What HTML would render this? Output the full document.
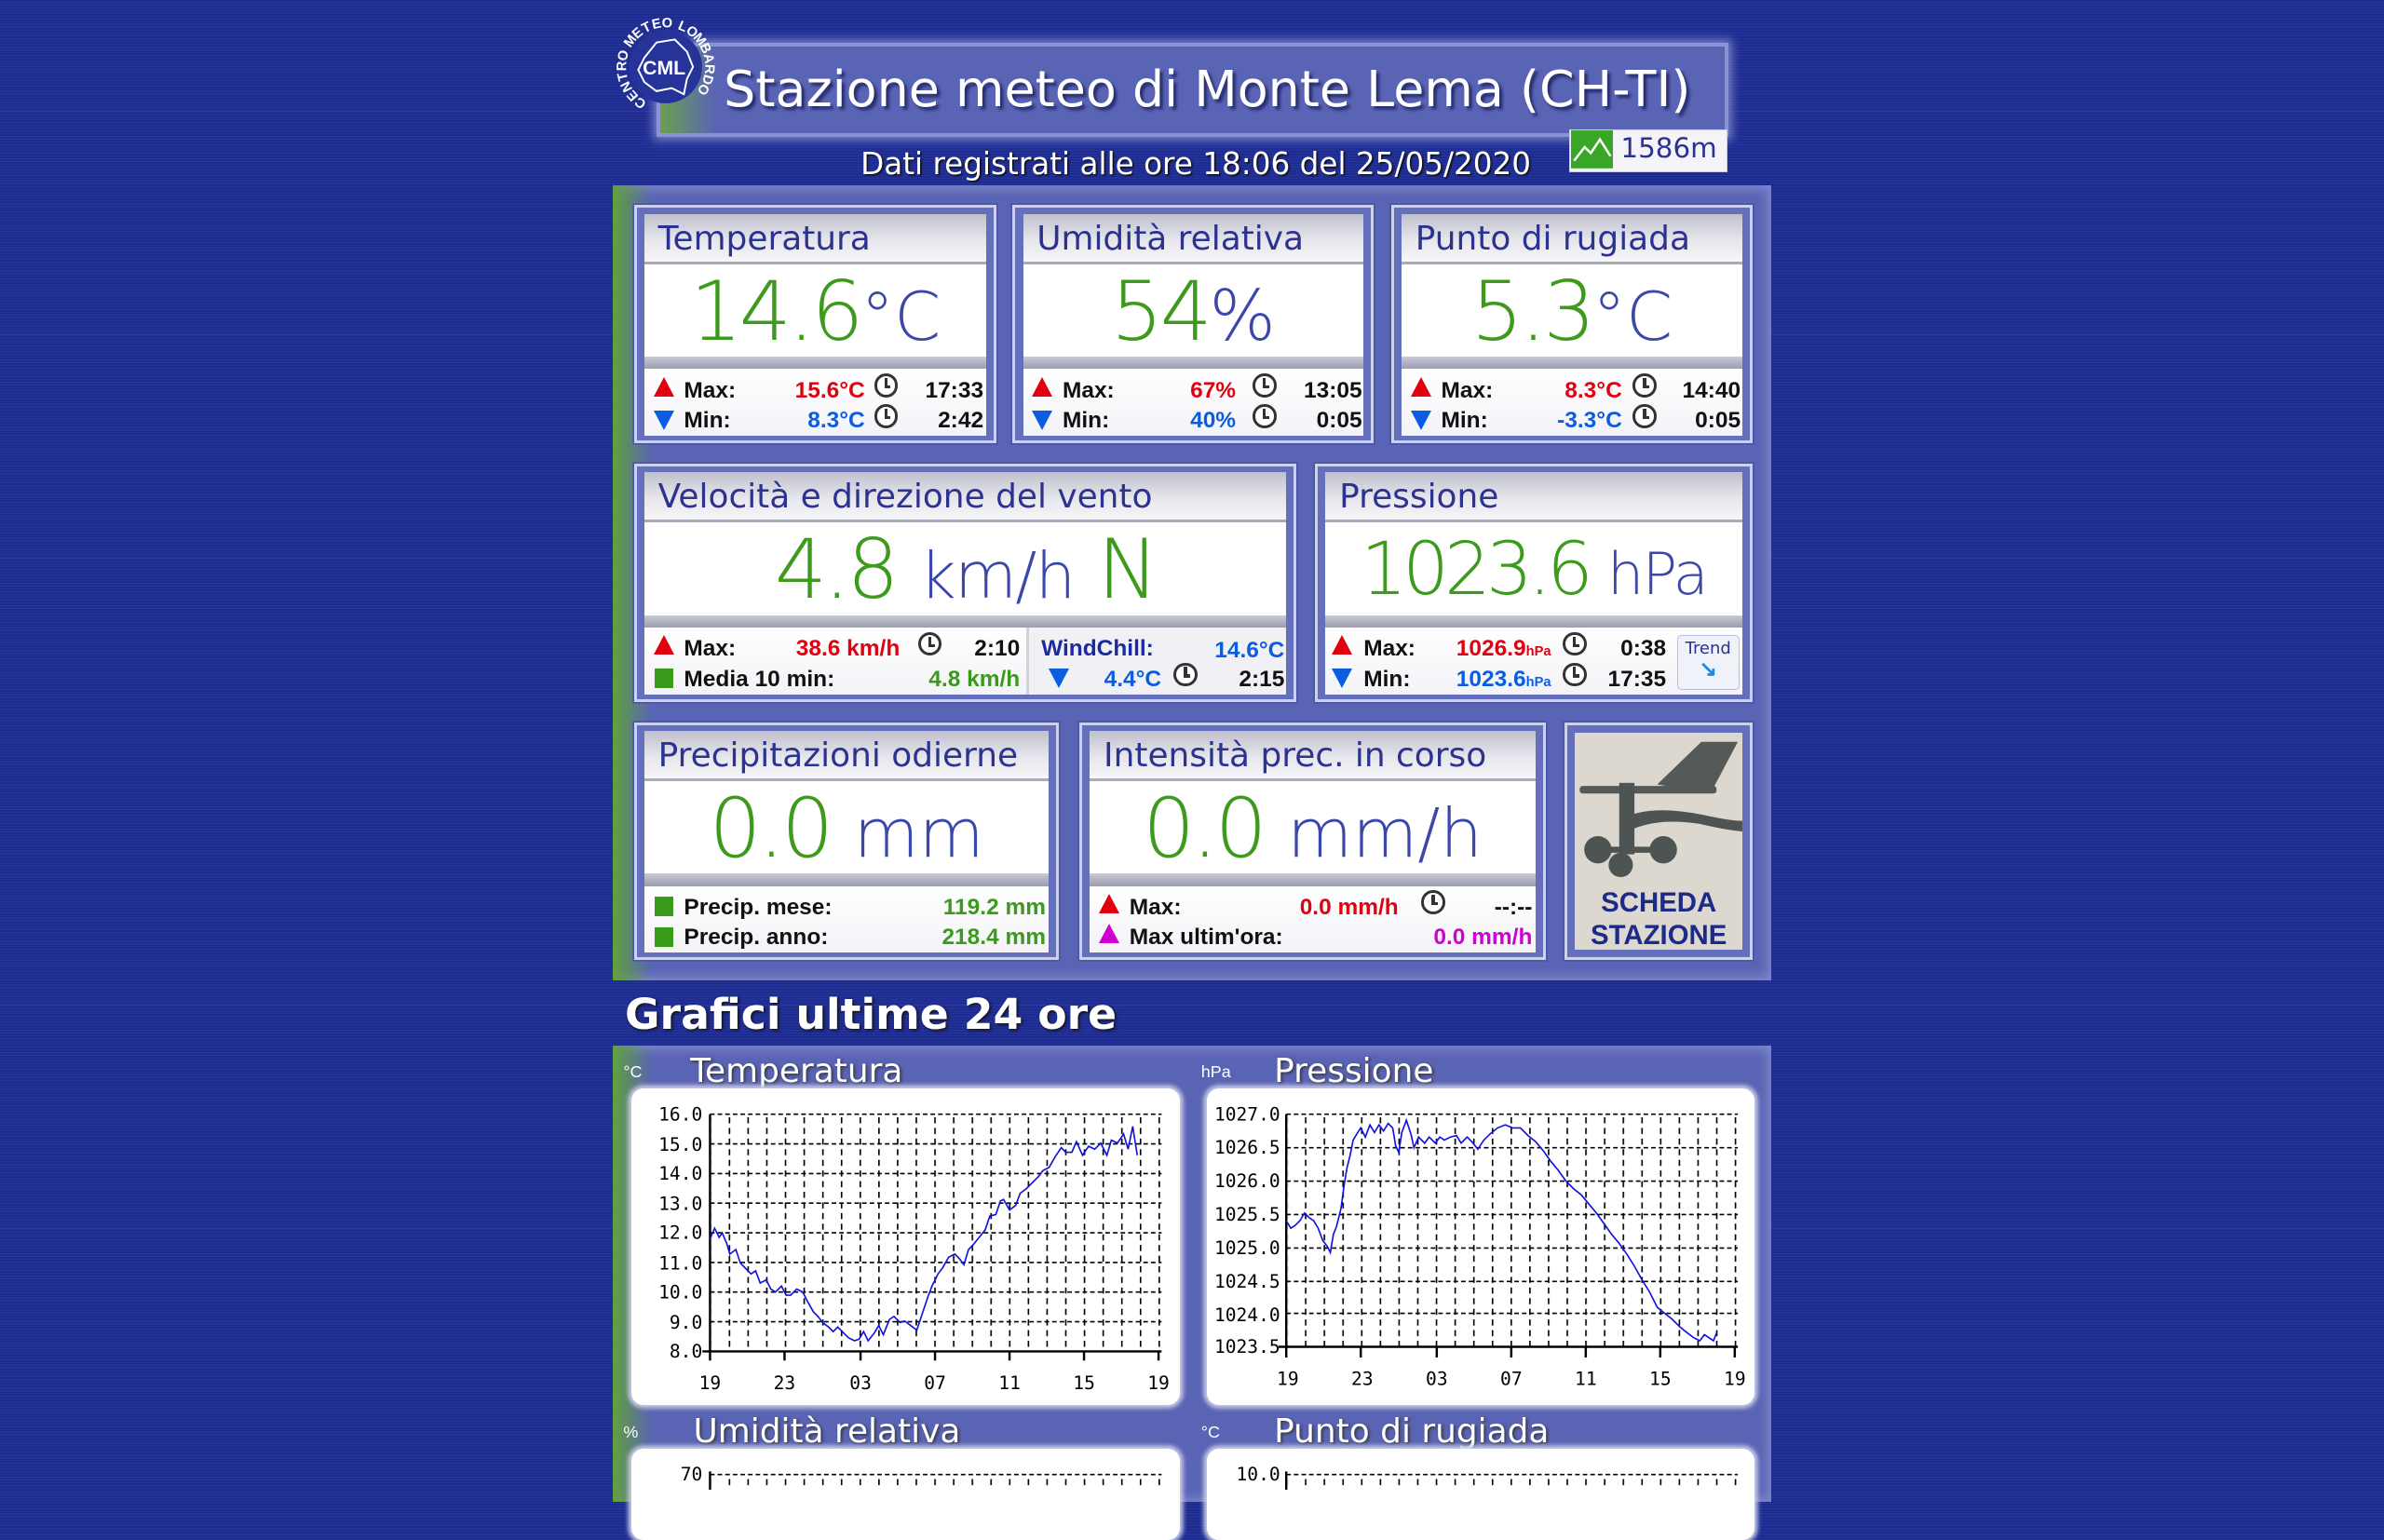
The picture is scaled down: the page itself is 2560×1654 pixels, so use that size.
<!DOCTYPE html>
<html><head><meta charset="utf-8">
<style>
html,body{margin:0;padding:0;}
body{width:1568px;height:980px;zoom:1.63265;overflow:hidden;position:relative;
background:repeating-linear-gradient(180deg,#1c2a8e 0px,#1c2a8e 2px,#2a399e 2px,#2a399e 3px);
font-family:"Liberation Sans",sans-serif;}
.a{position:absolute;}
.panel{position:absolute;background:#5a64b4;box-shadow:0 0 6px 3px #7a84c8 inset;}
.panel:before{content:"";position:absolute;left:0;top:0;bottom:0;width:26px;background:linear-gradient(90deg,#5fa03c,rgba(90,100,180,0));}
.card{position:absolute;border:2px solid #cdd1f0;background:#6570bd;box-shadow:0 0 0 1px #4a54a6;}
.hd{position:absolute;left:5px;right:5px;top:4px;height:31px;background:linear-gradient(180deg,#bfc0cc,#e6e6ec 55%,#f6f6f8);border-bottom:2px solid #a9aab8;
font-family:"DejaVu Sans",sans-serif;font-size:22px;color:#2b3290;line-height:33px;padding-left:9px;white-space:nowrap;overflow:hidden;}
.val{position:absolute;left:5px;right:5px;top:37px;height:61px;background:#fff;text-align:center;white-space:nowrap;overflow:hidden;
font-family:"DejaVu Sans",sans-serif;font-weight:200;color:#3d9a1c;line-height:62px;letter-spacing:-2px;}
.sep{position:absolute;left:5px;right:5px;top:98px;height:8px;background:linear-gradient(180deg,#c9cad6,#9a9cb0);}
.st{position:absolute;left:5px;right:5px;top:106px;height:44px;background:linear-gradient(180deg,#ffffff,#f3f3f8);}
.u{color:#3b47aa;letter-spacing:0;}
.r{position:absolute;font-weight:bold;font-size:15px;line-height:18px;white-space:nowrap;color:#111;}
.up{position:absolute;width:0;height:0;border-left:7px solid transparent;border-right:7px solid transparent;border-bottom:13px solid #e00010;}
.dn{position:absolute;width:0;height:0;border-left:7px solid transparent;border-right:7px solid transparent;border-top:13px solid #0a5de0;}
.sq{position:absolute;width:12px;height:13px;background:#3a9a1a;}
.ck{position:absolute;width:12px;height:12px;border:2px solid #333;border-radius:50%;background:#fff;}
.ck:before{content:"";position:absolute;left:5px;top:1px;width:2px;height:6px;background:#333;}
.ck:after{content:"";position:absolute;left:5px;top:6px;width:4px;height:2px;background:#333;}
.red{color:#e00010}.blu{color:#0a5de0}.grn{color:#3a9a1a}.mag{color:#d000d0}
.chl{position:absolute;color:#fff;font-family:"DejaVu Sans",sans-serif;font-size:22px;text-shadow:1px 1px 2px #333;}
.chu{position:absolute;color:#fff;font-size:11px;}
.cw{position:absolute;background:#fff;border-radius:8px;box-shadow:0 0 3px 2px #c8cce8;}
</style></head><body>

<!-- Title bar -->
<div class="a" style="left:432px;top:28px;width:705px;height:62px;background:linear-gradient(90deg,#6aa050 0px,#5a64b4 36px);border:3px solid #8a94d4;box-sizing:border-box;box-shadow:0 0 6px 2px #7a84c8;"></div>

<!-- Logo -->
<svg class="a" style="left:402px;top:8px" width="72" height="72" viewBox="0 0 72 72" font-family="Liberation Sans" font-weight="bold" font-size="9" fill="#fff" text-anchor="middle">
<circle cx="36" cy="36" r="24" fill="#26349a"/>
<path d="M22 30 L30 20 L42 18 L50 26 L54 36 L50 44 L48 54 L40 50 L30 52 L22 46 L18 38 Z" fill="none" stroke="#fff" stroke-width="1.2"/>
<text transform="rotate(-145 36 36)" x="36" y="10">C</text>
<text transform="rotate(-131 36 36)" x="36" y="10">E</text>
<text transform="rotate(-117 36 36)" x="36" y="10">N</text>
<text transform="rotate(-103 36 36)" x="36" y="10">T</text>
<text transform="rotate(-89 36 36)" x="36" y="10">R</text>
<text transform="rotate(-75 36 36)" x="36" y="10">O</text>
<text transform="rotate(-54 36 36)" x="36" y="10">M</text>
<text transform="rotate(-40 36 36)" x="36" y="10">E</text>
<text transform="rotate(-26 36 36)" x="36" y="10">T</text>
<text transform="rotate(-12 36 36)" x="36" y="10">E</text>
<text transform="rotate(2 36 36)" x="36" y="10">O</text>
<text transform="rotate(23 36 36)" x="36" y="10">L</text>
<text transform="rotate(37 36 36)" x="36" y="10">O</text>
<text transform="rotate(51 36 36)" x="36" y="10">M</text>
<text transform="rotate(65 36 36)" x="36" y="10">B</text>
<text transform="rotate(79 36 36)" x="36" y="10">A</text>
<text transform="rotate(93 36 36)" x="36" y="10">R</text>
<text transform="rotate(107 36 36)" x="36" y="10">D</text>
<text transform="rotate(121 36 36)" x="36" y="10">O</text>
<text x="35" y="41" font-size="13">CML</text>
</svg>

<div class="a" style="left:476px;top:39px;font-family:'DejaVu Sans',sans-serif;font-size:33px;color:#fff;text-shadow:2px 2px 2px #222a6a;white-space:nowrap;">Stazione meteo di Monte Lema (CH-TI)</div>
<div class="a" style="left:566px;top:96px;font-family:'DejaVu Sans',sans-serif;font-size:20px;color:#fff;white-space:nowrap;text-shadow:1px 1px 1px #111;">Dati registrati alle ore 18:06 del 25/05/2020</div>
<div class="a" style="left:1032px;top:85px;width:103px;height:27px;background:#f4f4f8;border:1px solid #c8cce8;"></div>
<svg class="a" style="left:1033px;top:86px" width="28" height="25" viewBox="0 0 28 25"><rect width="28" height="25" fill="#3aa628"/><path d="M2 20 L9 11 L13 15 L19 6 L26 17" fill="none" stroke="#fff" stroke-width="1.5"/></svg>
<div class="a" style="left:1066px;top:87px;font-family:'DejaVu Sans',sans-serif;font-size:18px;color:#2b3290;">1586m</div>

<!-- Main panel -->
<div class="panel" style="left:403px;top:122px;width:762px;height:523px;"></div>

<!-- Card Temperatura -->
<div class="card" style="left:417px;top:135px;width:235px;height:153px;">
 <div class="hd">Temperatura</div>
 <div class="val" style="font-size:54px;">14.6<span class="u" style="font-size:44px">°C</span></div>
 <div class="sep"></div><div class="st"></div>
 <div class="up" style="left:11px;top:111px"></div><div class="r" style="left:31px;top:111px">Max:</div>
 <div class="r red" style="right:85px;top:111px">15.6°C</div><div class="ck" style="left:156px;top:109px"></div><div class="r" style="right:7px;top:111px">17:33</div>
 <div class="dn" style="left:11px;top:133px"></div><div class="r" style="left:31px;top:131px">Min:</div>
 <div class="r blu" style="right:85px;top:131px">8.3°C</div><div class="ck" style="left:156px;top:129px"></div><div class="r" style="right:7px;top:131px">2:42</div>
</div>

<!-- Umidita -->
<div class="card" style="left:666px;top:135px;width:234px;height:153px;">
 <div class="hd">Umidità relativa</div>
 <div class="val" style="font-size:54px;">54<span class="u" style="font-size:46px">%</span></div>
 <div class="sep"></div><div class="st"></div>
 <div class="up" style="left:11px;top:111px"></div><div class="r" style="left:31px;top:111px">Max:</div>
 <div class="r red" style="right:89px;top:111px">67%</div><div class="ck" style="left:156px;top:109px"></div><div class="r" style="right:6px;top:111px">13:05</div>
 <div class="dn" style="left:11px;top:133px"></div><div class="r" style="left:31px;top:131px">Min:</div>
 <div class="r blu" style="right:89px;top:131px">40%</div><div class="ck" style="left:156px;top:129px"></div><div class="r" style="right:6px;top:131px">0:05</div>
</div>

<!-- Rugiada -->
<div class="card" style="left:915px;top:135px;width:234px;height:153px;">
 <div class="hd">Punto di rugiada</div>
 <div class="val" style="font-size:54px;">5.3<span class="u" style="font-size:44px">°C</span></div>
 <div class="sep"></div><div class="st"></div>
 <div class="up" style="left:11px;top:111px"></div><div class="r" style="left:31px;top:111px">Max:</div>
 <div class="r red" style="right:84px;top:111px">8.3°C</div><div class="ck" style="left:157px;top:109px"></div><div class="r" style="right:6px;top:111px">14:40</div>
 <div class="dn" style="left:11px;top:133px"></div><div class="r" style="left:31px;top:131px">Min:</div>
 <div class="r blu" style="right:84px;top:131px">-3.3°C</div><div class="ck" style="left:157px;top:129px"></div><div class="r" style="right:6px;top:131px">0:05</div>
</div>

<!-- Vento -->
<div class="card" style="left:417px;top:305px;width:432px;height:153px;">
 <div class="hd">Velocità e direzione del vento</div>
 <div class="val" style="font-size:54px;">4.8 <span class="u" style="font-size:42px;letter-spacing:-1px">km/h</span> N</div>
 <div class="sep"></div><div class="st"></div>
 <div class="a" style="left:256px;top:106px;width:2px;height:44px;background:#d0d2dc"></div>
 <div class="a" style="left:258px;top:106px;width:169px;height:44px;background:#f0f0f5"></div>
 <div class="up" style="left:11px;top:111px"></div><div class="r" style="left:31px;top:111px">Max:</div>
 <div class="r red" style="right:259px;top:111px">38.6 km/h</div><div class="ck" style="left:185px;top:109px"></div><div class="r" style="right:180px;top:111px">2:10</div>
 <div class="sq" style="left:12px;top:133px"></div><div class="r" style="left:31px;top:131px">Media 10 min:</div>
 <div class="r grn" style="right:180px;top:131px">4.8 km/h</div>
 <div class="r" style="left:266px;top:111px;color:#1a2aa0">WindChill:</div><div class="r blu" style="right:6px;top:112px">14.6°C</div>
 <div class="dn" style="left:271px;top:133px"></div><div class="r blu" style="right:87px;top:131px">4.4°C</div><div class="ck" style="left:353px;top:129px"></div><div class="r" style="right:6px;top:131px">2:15</div>
</div>

<!-- Pressione -->
<div class="card" style="left:865px;top:305px;width:284px;height:153px;">
 <div class="hd">Pressione</div>
 <div class="val" style="font-size:48px;letter-spacing:-3px;">1023.6 <span class="u" style="font-size:38px;letter-spacing:-1px">hPa</span></div>
 <div class="sep"></div><div class="st"></div>
 <div class="up" style="left:9px;top:111px"></div><div class="r" style="left:30px;top:111px">Max:</div>
 <div class="r red" style="left:91px;top:111px">1026.9<span style="font-size:9px">hPa</span></div><div class="ck" style="left:161px;top:109px"></div><div class="r" style="right:55px;top:111px">0:38</div>
 <div class="dn" style="left:9px;top:133px"></div><div class="r" style="left:30px;top:131px">Min:</div>
 <div class="r blu" style="left:91px;top:131px">1023.6<span style="font-size:9px">hPa</span></div><div class="ck" style="left:161px;top:129px"></div><div class="r" style="right:55px;top:131px">17:35</div>
 <div class="a" style="left:236px;top:111px;width:40px;height:35px;background:#f0f2fa;border:1px solid #b8bee0;border-radius:3px;text-align:center;">
  <div style="font-family:'DejaVu Sans';font-size:11px;color:#2b3290;margin-top:2px">Trend</div>
  <div style="font-size:14px;color:#1a8ae0;font-weight:bold;line-height:14px">↘</div></div>
</div>

<!-- Precipitazioni -->
<div class="card" style="left:417px;top:475px;width:276px;height:153px;">
 <div class="hd">Precipitazioni odierne</div>
 <div class="val" style="font-size:54px;">0.0 <span class="u" style="font-size:44px">mm</span></div>
 <div class="sep"></div><div class="st"></div>
 <div class="sq" style="left:12px;top:113px"></div><div class="r" style="left:31px;top:111px">Precip. mese:</div><div class="r grn" style="right:7px;top:111px">119.2 mm</div>
 <div class="sq" style="left:12px;top:133px"></div><div class="r" style="left:31px;top:131px">Precip. anno:</div><div class="r grn" style="right:7px;top:131px">218.4 mm</div>
</div>

<!-- Intensita -->
<div class="card" style="left:710px;top:475px;width:303px;height:153px;">
 <div class="hd">Intensità prec. in corso</div>
 <div class="val" style="font-size:54px;">0.0 <span class="u" style="font-size:44px">mm/h</span></div>
 <div class="sep"></div><div class="st"></div>
 <div class="up" style="left:11px;top:111px"></div><div class="r" style="left:31px;top:111px">Max:</div>
 <div class="r red" style="right:95px;top:111px">0.0 mm/h</div><div class="ck" style="left:223px;top:109px"></div><div class="r" style="right:7px;top:111px">--:--</div>
 <div class="up" style="left:11px;top:131px;border-bottom-color:#d000d0"></div><div class="r" style="left:31px;top:131px">Max ultim'ora:</div><div class="r mag" style="right:7px;top:131px">0.0 mm/h</div>
</div>

<!-- Scheda -->
<div class="card" style="left:1029px;top:475px;width:120px;height:153px;">
 <div class="a" style="left:5px;top:5px;right:5px;bottom:5px;background:#dcd8d0;"></div>
</div>
<svg class="a" style="left:0;top:0" width="1568" height="980" viewBox="0 0 1568 980">
 <polygon points="1090,516 1119,488 1143,488 1125,522" fill="#555a58"/>
 <rect x="1039" y="517" width="90" height="5" rx="2" fill="#555a58"/>
 <rect x="1065" y="515" width="10" height="47" fill="#4e5452"/>
 <path d="M1073 536 Q1090 530 1120 536 Q1138 540 1146 540 L1146 547 Q1135 546 1118 542 Q1092 538 1075 545 Z" fill="#4e5452"/>
 <path d="M1051 559 L1094 559 M1066 569 L1070 552" stroke="#4e5452" stroke-width="4"/>
 <circle cx="1051" cy="559" r="9" fill="#4e5452"/><circle cx="1094" cy="559" r="9" fill="#4e5452"/><circle cx="1066" cy="569" r="8" fill="#4e5452"/>
</svg>
<div class="a" style="left:1031px;width:120px;top:584px;text-align:center;font-weight:bold;font-size:18px;color:#1e2a88;line-height:21px;">SCHEDA<br>STAZIONE</div>

<!-- Grafici -->
<div class="a" style="left:411px;top:651px;font-family:'DejaVu Sans',sans-serif;font-size:28px;font-weight:bold;color:#fff;text-shadow:1px 1px 2px #111;">Grafici ultime 24 ore</div>
<div class="panel" style="left:403px;top:688px;width:762px;height:300px;"></div>

<div class="chu" style="left:410px;top:699px">°C</div><div class="chl" style="left:454px;top:692px">Temperatura</div>
<div class="chu" style="left:790px;top:699px">hPa</div><div class="chl" style="left:838px;top:692px">Pressione</div>
<div class="chu" style="left:410px;top:936px">%</div><div class="chl" style="left:456px;top:929px">Umidità relativa</div>
<div class="chu" style="left:790px;top:936px">°C</div><div class="chl" style="left:838px;top:929px">Punto di rugiada</div>

<div class="cw" style="left:415px;top:716px;width:361px;height:208px;"></div>
<div class="cw" style="left:794px;top:716px;width:360px;height:208px;"></div>
<div class="cw" style="left:415px;top:953px;width:361px;height:60px;"></div>
<div class="cw" style="left:794px;top:953px;width:360px;height:60px;"></div>

<svg class="a" style="left:0;top:0" width="1568" height="980" viewBox="0 0 1568 980" font-family="DejaVu Sans Mono, Liberation Mono, monospace" font-size="12">
<defs>
<pattern id="v1" x="467" y="0" width="12.29" height="7" patternUnits="userSpaceOnUse"><rect x="0" y="0" width="1" height="4" fill="#000"/></pattern>
<pattern id="v2" x="846" y="0" width="12.29" height="7" patternUnits="userSpaceOnUse"><rect x="0" y="0" width="1" height="4" fill="#000"/></pattern>
</defs>
<rect x="468" y="733" width="296" height="156" fill="url(#v1)"/>
<g stroke="#000" stroke-dasharray="3,2" stroke-width="1">
<line x1="467" y1="733" x2="764" y2="733"/><line x1="467" y1="752.5" x2="764" y2="752.5"/><line x1="467" y1="772" x2="764" y2="772"/><line x1="467" y1="791.5" x2="764" y2="791.5"/><line x1="467" y1="811" x2="764" y2="811"/><line x1="467" y1="830.5" x2="764" y2="830.5"/><line x1="467" y1="850" x2="764" y2="850"/><line x1="467" y1="869.5" x2="764" y2="869.5"/>
</g>
<g stroke="#000" stroke-width="1.5"><line x1="467" y1="733" x2="467" y2="895"/><line x1="462" y1="889" x2="764" y2="889"/>
<line x1="516" y1="889" x2="516" y2="895"/><line x1="566" y1="889" x2="566" y2="895"/><line x1="615" y1="889" x2="615" y2="895"/><line x1="664" y1="889" x2="664" y2="895"/><line x1="713" y1="889" x2="713" y2="895"/><line x1="762" y1="889" x2="762" y2="895"/></g>
<g text-anchor="end" fill="#000"><text x="462" y="737">16.0</text><text x="462" y="757">15.0</text><text x="462" y="776">14.0</text><text x="462" y="796">13.0</text><text x="462" y="815">12.0</text><text x="462" y="835">11.0</text><text x="462" y="854">10.0</text><text x="462" y="874">9.0</text><text x="462" y="893">8.0</text></g>
<g text-anchor="middle" fill="#000"><text x="467" y="914">19</text><text x="516" y="914">23</text><text x="566" y="914">03</text><text x="615" y="914">07</text><text x="664" y="914">11</text><text x="713" y="914">15</text><text x="762" y="914">19</text></g>
<polyline fill="none" stroke="#1010e0" stroke-width="1" points="467,815 470,808 473,814 475,811 478,818 480,825 484,822 487,831 490,834 494,838 497,836 500,844 504,842 507,848 510,850 514,846 517,852 520,852 524,848 528,850 531,856 535,863 538,866 541,870 545,873 548,876 551,873 555,877 558,880 562,882 565,881 568,876 571,882 575,877 578,872 581,878 585,868 588,866 592,870 595,869 599,872 603,875 606,866 610,854 613,846 617,838 620,834 624,827 628,825 631,828 634,832 637,822 640,819 644,814 648,809 651,800 655,799 658,790 660,789 664,796 668,793 671,785 675,782 679,778 683,774 686,770 690,768 694,761 698,755 701,758 705,758 708,751 712,760 716,754 720,756 724,752 728,760 731,750 735,752 739,746 742,756 745,741 748,760"/>
<rect x="847" y="733" width="296" height="153" fill="url(#v2)"/>
<g stroke="#000" stroke-dasharray="3,2" stroke-width="1">
<line x1="846" y1="733" x2="1143" y2="733"/><line x1="846" y1="755" x2="1143" y2="755"/><line x1="846" y1="777" x2="1143" y2="777"/><line x1="846" y1="799" x2="1143" y2="799"/><line x1="846" y1="821" x2="1143" y2="821"/><line x1="846" y1="843" x2="1143" y2="843"/><line x1="846" y1="864" x2="1143" y2="864"/>
</g>
<g stroke="#000" stroke-width="1.5"><line x1="846" y1="733" x2="846" y2="893"/><line x1="841" y1="886" x2="1143" y2="886"/>
<line x1="895" y1="886" x2="895" y2="893"/><line x1="945" y1="886" x2="945" y2="893"/><line x1="994" y1="886" x2="994" y2="893"/><line x1="1043" y1="886" x2="1043" y2="893"/><line x1="1092" y1="886" x2="1092" y2="893"/><line x1="1141" y1="886" x2="1141" y2="893"/></g>
<g text-anchor="end" fill="#000"><text x="842" y="737">1027.0</text><text x="842" y="759">1026.5</text><text x="842" y="781">1026.0</text><text x="842" y="803">1025.5</text><text x="842" y="825">1025.0</text><text x="842" y="847">1024.5</text><text x="842" y="869">1024.0</text><text x="842" y="890">1023.5</text></g>
<g text-anchor="middle" fill="#000"><text x="847" y="911">19</text><text x="896" y="911">23</text><text x="945" y="911">03</text><text x="994" y="911">07</text><text x="1043" y="911">11</text><text x="1092" y="911">15</text><text x="1141" y="911">19</text></g>
<polyline fill="none" stroke="#1010e0" stroke-width="1" points="846,803 849,808 852,806 855,803 858,798 861,801 864,803 867,808 870,816 873,820 875,824 877,812 879,807 882,795 884,780 886,768 888,760 890,750 893,745 895,742 898,748 901,740 904,745 907,740 910,744 913,739 916,742 918,754 920,758 922,745 925,737 928,746 930,755 933,748 937,752 940,748 944,752 947,748 950,750 954,748 958,747 961,752 965,748 968,751 972,756 976,750 980,746 985,742 990,740 995,742 1000,742 1005,747 1010,751 1015,757 1020,764 1025,770 1030,777 1035,782 1040,786 1045,792 1050,798 1055,805 1060,812 1065,818 1070,825 1075,833 1080,842 1085,850 1090,860 1095,864 1100,868 1105,873 1110,877 1114,880 1118,882 1121,878 1124,880 1127,882 1129,877"/>
<rect x="468" y="970" width="296" height="20" fill="url(#v1)"/>
<line x1="467" y1="970" x2="764" y2="970" stroke="#000" stroke-dasharray="3,2"/><line x1="467" y1="968" x2="467" y2="990" stroke="#000" stroke-width="1.5"/>
<text x="462" y="974" text-anchor="end">70</text>
<rect x="847" y="970" width="296" height="20" fill="url(#v2)"/>
<line x1="846" y1="970" x2="1143" y2="970" stroke="#000" stroke-dasharray="3,2"/><line x1="846" y1="968" x2="846" y2="990" stroke="#000" stroke-width="1.5"/>
<text x="842" y="974" text-anchor="end">10.0</text>
</svg>
</body></html>
